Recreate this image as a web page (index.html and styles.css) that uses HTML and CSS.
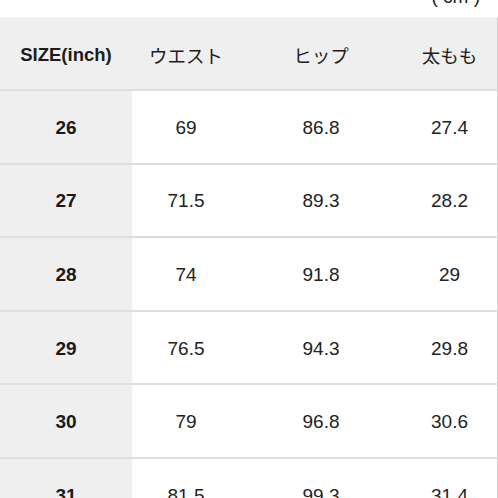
FILE: index.html
```html
<!DOCTYPE html>
<html lang="ja">
<head>
<meta charset="utf-8">
<link rel="stylesheet" href="styles.css">
</head>
<body>
<div class="page">
  <div class="unit"><span class="unit-text">( cm )</span></div>
  <table class="size-table">
    <thead>
      <tr>
        <th class="c1">SIZE(inch)</th>
        <th class="c2">ウエスト</th>
        <th class="c3">ヒップ</th>
        <th class="c4">太もも</th>
      </tr>
    </thead>
    <tbody>
      <tr><th class="c1">26</th><td>69</td><td>86.8</td><td>27.4</td></tr>
      <tr><th class="c1">27</th><td>71.5</td><td>89.3</td><td>28.2</td></tr>
      <tr><th class="c1">28</th><td>74</td><td>91.8</td><td>29</td></tr>
      <tr><th class="c1">29</th><td>76.5</td><td>94.3</td><td>29.8</td></tr>
      <tr><th class="c1">30</th><td>79</td><td>96.8</td><td>30.6</td></tr>
      <tr><th class="c1">31</th><td>81.5</td><td>99.3</td><td>31.4</td></tr>
    </tbody>
  </table>
</div>
</body>
</html>
```

FILE: styles.css
```css
html, body {
  margin: 0;
  padding: 0;
  background: #ffffff;
}
body {
  font-family: "Liberation Sans", "Noto Sans CJK JP", sans-serif;
  color: #1e1e1e;
  overflow: hidden;
}
.page {
  width: 498px;
  height: 498px;
  overflow: hidden;
}
.unit {
  height: 18px;
  overflow: hidden;
  display: flex;
  justify-content: flex-end;
  padding-right: 18px;
  border-bottom: 1px solid #f4f4f4;
  box-sizing: border-box;
}
.unit-text {
  font-size: 19px;
  line-height: 18px;
  margin-top: -12px;
  color: #222;
}
.size-table {
  width: 498px;
  border-collapse: collapse;
  table-layout: fixed;
  border-right: 1px solid #cfcfcf;
}
.size-table th, .size-table td {
  padding: 2px 0 0 0;
  text-align: center;
  font-size: 19px;
  font-weight: normal;
  border-bottom: 2px solid #dedede;
}
.size-table thead th {
  background: #efefef;
  height: 69px;
  color: #1c1c1c;
  font-size: 18.5px;
}
.size-table thead th.c1 {
  font-weight: bold;
}
.size-table tbody th, .size-table tbody td {
  height: 69.6px;
}
.size-table tbody th.c1 {
  background: #efefef;
  font-weight: bold;
  color: #1a1a1a;
}
.size-table tbody td {
  background: #ffffff;
  color: #222;
}
.c1 { width: 132px; }
.c2 { width: 108px; }
.c3 { width: 162px; }
.c4 { width: 95px; }
```
